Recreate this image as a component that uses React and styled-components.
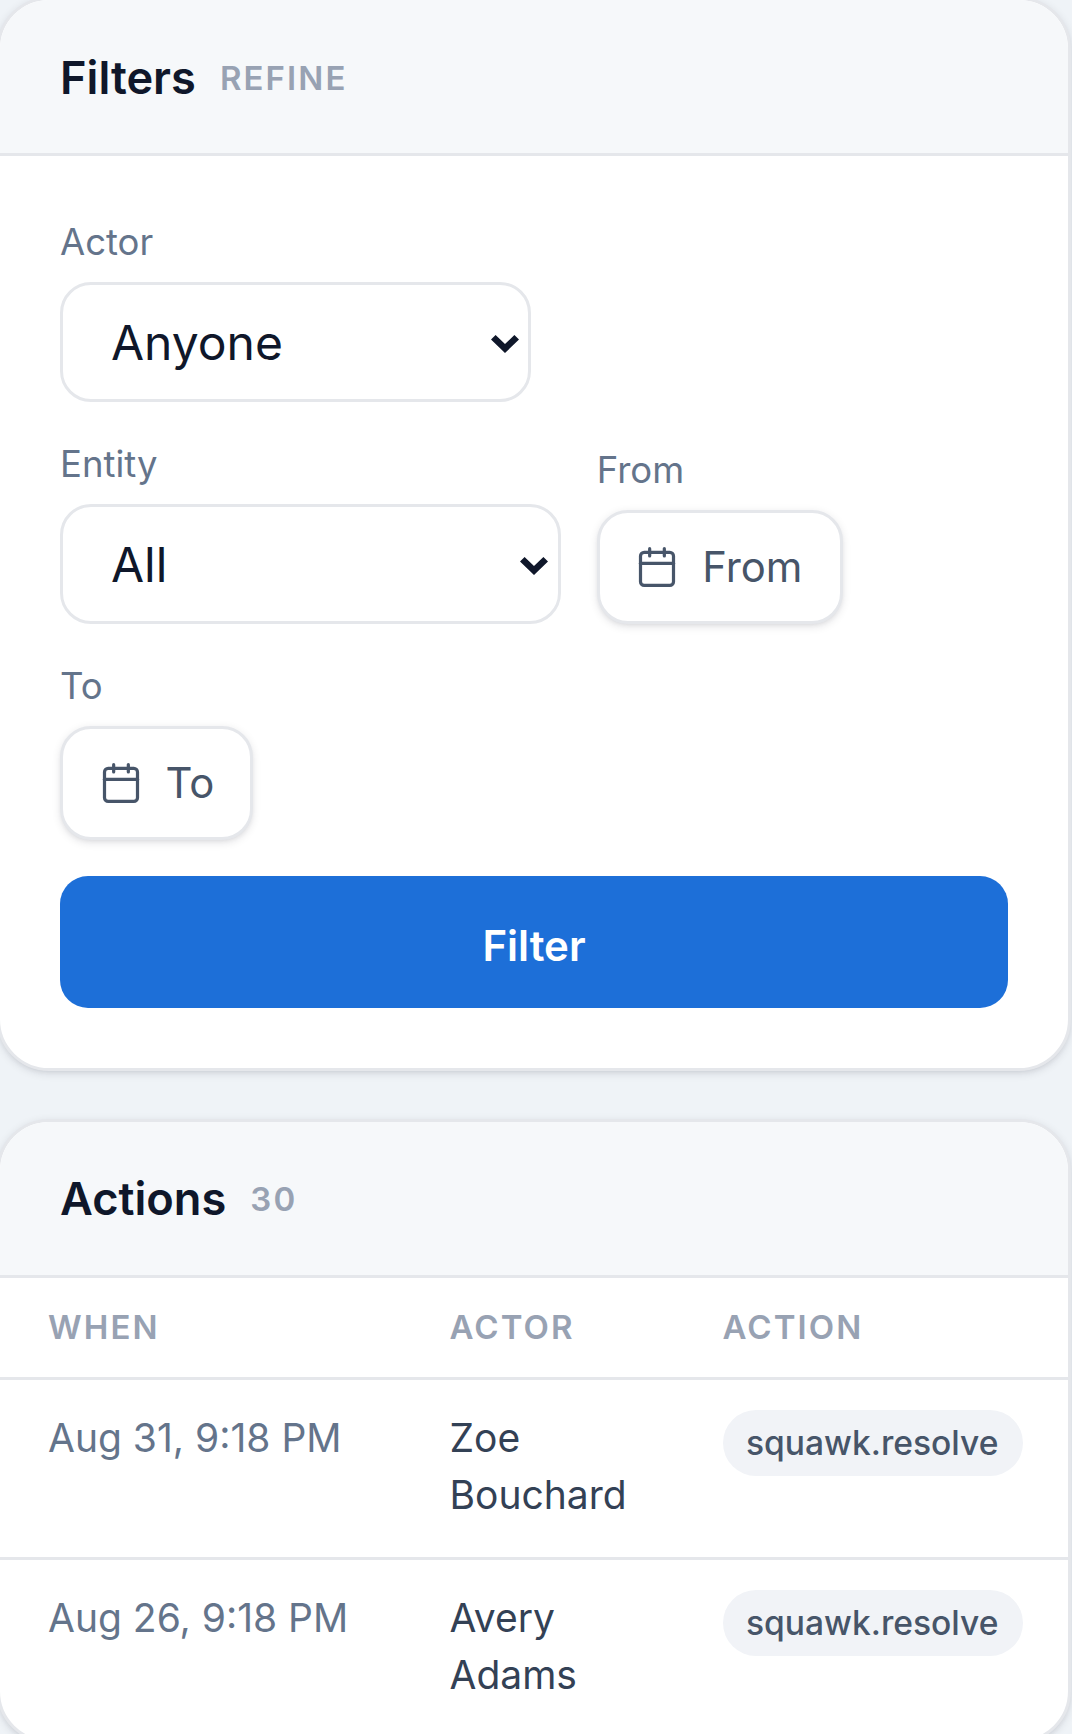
import React from "react";
import styled, { createGlobalStyle } from "styled-components";
import { Calendar } from "lucide-react";

const Global = createGlobalStyle`
  html, body { margin: 0; padding: 0; height: 1734px; overflow: hidden; background: #eff3f7; }
  body { font-family: Inter, "Liberation Sans", sans-serif; }
  #root { width: 1072px; height: 1734px; overflow: hidden; }
  * { box-sizing: border-box; }
`;

const Page = styled.main`
  display: flex;
  flex-direction: column;
  gap: 47.5px;
  width: 1074px;
  margin: -3px 0 0 -3px;
`;

const raised = `0 2.75px 8px rgba(15, 23, 42, 0.1), 0 2.75px 5.5px -2.75px rgba(15, 23, 42, 0.1)`;

const Card = styled.section`
  background: #fff;
  border: 3px solid #e5e7eb;
  border-radius: 52px;
  box-shadow: ${raised};
  overflow: hidden;
`;

const CardHeader = styled.header`
  display: flex;
  align-items: center;
  gap: 24px;
  height: 156px;
  padding: 2px 60px 0;
  background: #f6f8fa;
  border-bottom: 3px solid #e5e7eb;
`;

const CardTitle = styled.h2`
  margin: 0;
  font-size: 45.2px;
  line-height: 56px;
  font-weight: 600;
  color: #0f172a;
`;

const CardMeta = styled.span`
  font-size: 33px;
  font-weight: 600;
  letter-spacing: 2.1px;
  color: #98a2b3;
`;

const FilterForm = styled.form`
  display: flex;
  flex-wrap: wrap;
  align-items: flex-end;
  gap: 36px;
  padding: 60px 60px 60px;
`;

const Field = styled.div`
  display: flex;
  flex-direction: column;
  gap: 13px;
`;

const Label = styled.label`
  font-size: 36.5px;
  line-height: 53px;
  color: #64748b;
`;

const chevron = encodeURIComponent(
  '<svg xmlns="http://www.w3.org/2000/svg" width="28" height="18" viewBox="0 0 28 18"><polygon points="0,4.4 4.6,0 14,9 23.4,0 28,4.4 14,18" fill="#0f172a"/></svg>'
);

const Select = styled.select`
  appearance: none;
  display: block;
  width: ${(p) => p.$width}px;
  height: 120px;
  padding: 0 48px;
  border: 3px solid #e5e7eb;
  border-radius: 31px;
  background: #fff url("data:image/svg+xml,${chevron}") no-repeat right 9.5px top calc(50% + 1.5px);
  font-family: inherit;
  font-size: 48px;
  color: #0f172a;
`;

const DateButton = styled.button`
  display: flex;
  align-items: center;
  gap: 23px;
  height: 114px;
  padding: 0 ${(p) => p.$right}px 0 35.5px;
  border: 3px solid #e5e7eb;
  border-radius: 31px;
  background: #fff;
  box-shadow: ${raised};
  font-family: inherit;
  font-size: 41.8px;
  color: #475569;
`;

const SubmitButton = styled.button`
  flex: 0 0 100%;
  height: 132px;
  padding: 6px 0 0;
  border: 0;
  border-radius: 28px;
  background: #1d6fd8;
  color: #fff;
  font-family: inherit;
  font-size: 42px;
  font-weight: 600;
`;

const Table = styled.table`
  width: 100%;
  table-layout: fixed;
  border-collapse: separate;
  border-spacing: 0;
`;

const HeadCell = styled.th`
  width: ${(p) => p.$width || "auto"};
  height: 102.5px;
  padding: 0 0 0 ${(p) => p.$pad || 0}px;
  border-bottom: 3px solid #e5e7eb;
  text-align: left;
  font-size: 33px;
  font-weight: 600;
  letter-spacing: 2.1px;
  color: #98a2b3;
`;

const Cell = styled.td`
  padding: 30px ${(p) => p.$right || 0}px 33.6px ${(p) => p.$pad || 0}px;
  border-bottom: 3px solid #e5e7eb;
  vertical-align: top;
  font-size: 39px;
  line-height: 56.7px;
  color: ${(p) => p.$color};
`;

const Pill = styled.span`
  display: inline-block;
  width: 300px;
  height: 66px;
  padding: 0 0 0 23.5px;
  border-radius: 33px;
  background: #f1f3f7;
  font-size: 33.6px;
  line-height: 66px;
  font-weight: 500;
  color: #475569;
  vertical-align: top;
`;

const rows = [
  { when: "Aug 31, 9:18 PM", actor: "Zoe Bouchard", action: "squawk.resolve" },
  { when: "Aug 26, 9:18 PM", actor: "Avery Adams", action: "squawk.resolve" },
];

const DateField = ({ label, right }) => (
  <Field>
    <Label>{label}</Label>
    <DateButton type="button" $right={right}>
      <Calendar size={44} strokeWidth={1.75} />
      {label}
    </DateButton>
  </Field>
);

export default function App() {
  return (
    <Page>
      <Global />
      <Card>
        <CardHeader>
          <CardTitle>Filters</CardTitle>
          <CardMeta>REFINE</CardMeta>
        </CardHeader>
        <FilterForm>
          <Field>
            <Label>Actor</Label>
            <Select $width={471} defaultValue="Anyone">
              <option>Anyone</option>
            </Select>
          </Field>
          <Field>
            <Label>Entity</Label>
            <Select $width={500.7} defaultValue="All">
              <option>All</option>
            </Select>
          </Field>
          <DateField label="From" right={38} />
          <DateField label="To" right={36} />
          <SubmitButton type="button">Filter</SubmitButton>
        </FilterForm>
      </Card>
      <Card>
        <CardHeader>
          <CardTitle>Actions</CardTitle>
          <CardMeta>30</CardMeta>
        </CardHeader>
        <Table>
          <thead>
            <tr>
              <HeadCell $width="449.5px" $pad={48}>WHEN</HeadCell>
              <HeadCell $width="273px">ACTOR</HeadCell>
              <HeadCell>ACTION</HeadCell>
            </tr>
          </thead>
          <tbody>
            {rows.map((r) => (
              <tr key={r.when}>
                <Cell $pad={48} $color="#64748b">{r.when}</Cell>
                <Cell $right={40} $color="#334155">{r.actor}</Cell>
                <Cell><Pill>{r.action}</Pill></Cell>
              </tr>
            ))}
          </tbody>
        </Table>
      </Card>
    </Page>
  );
}
